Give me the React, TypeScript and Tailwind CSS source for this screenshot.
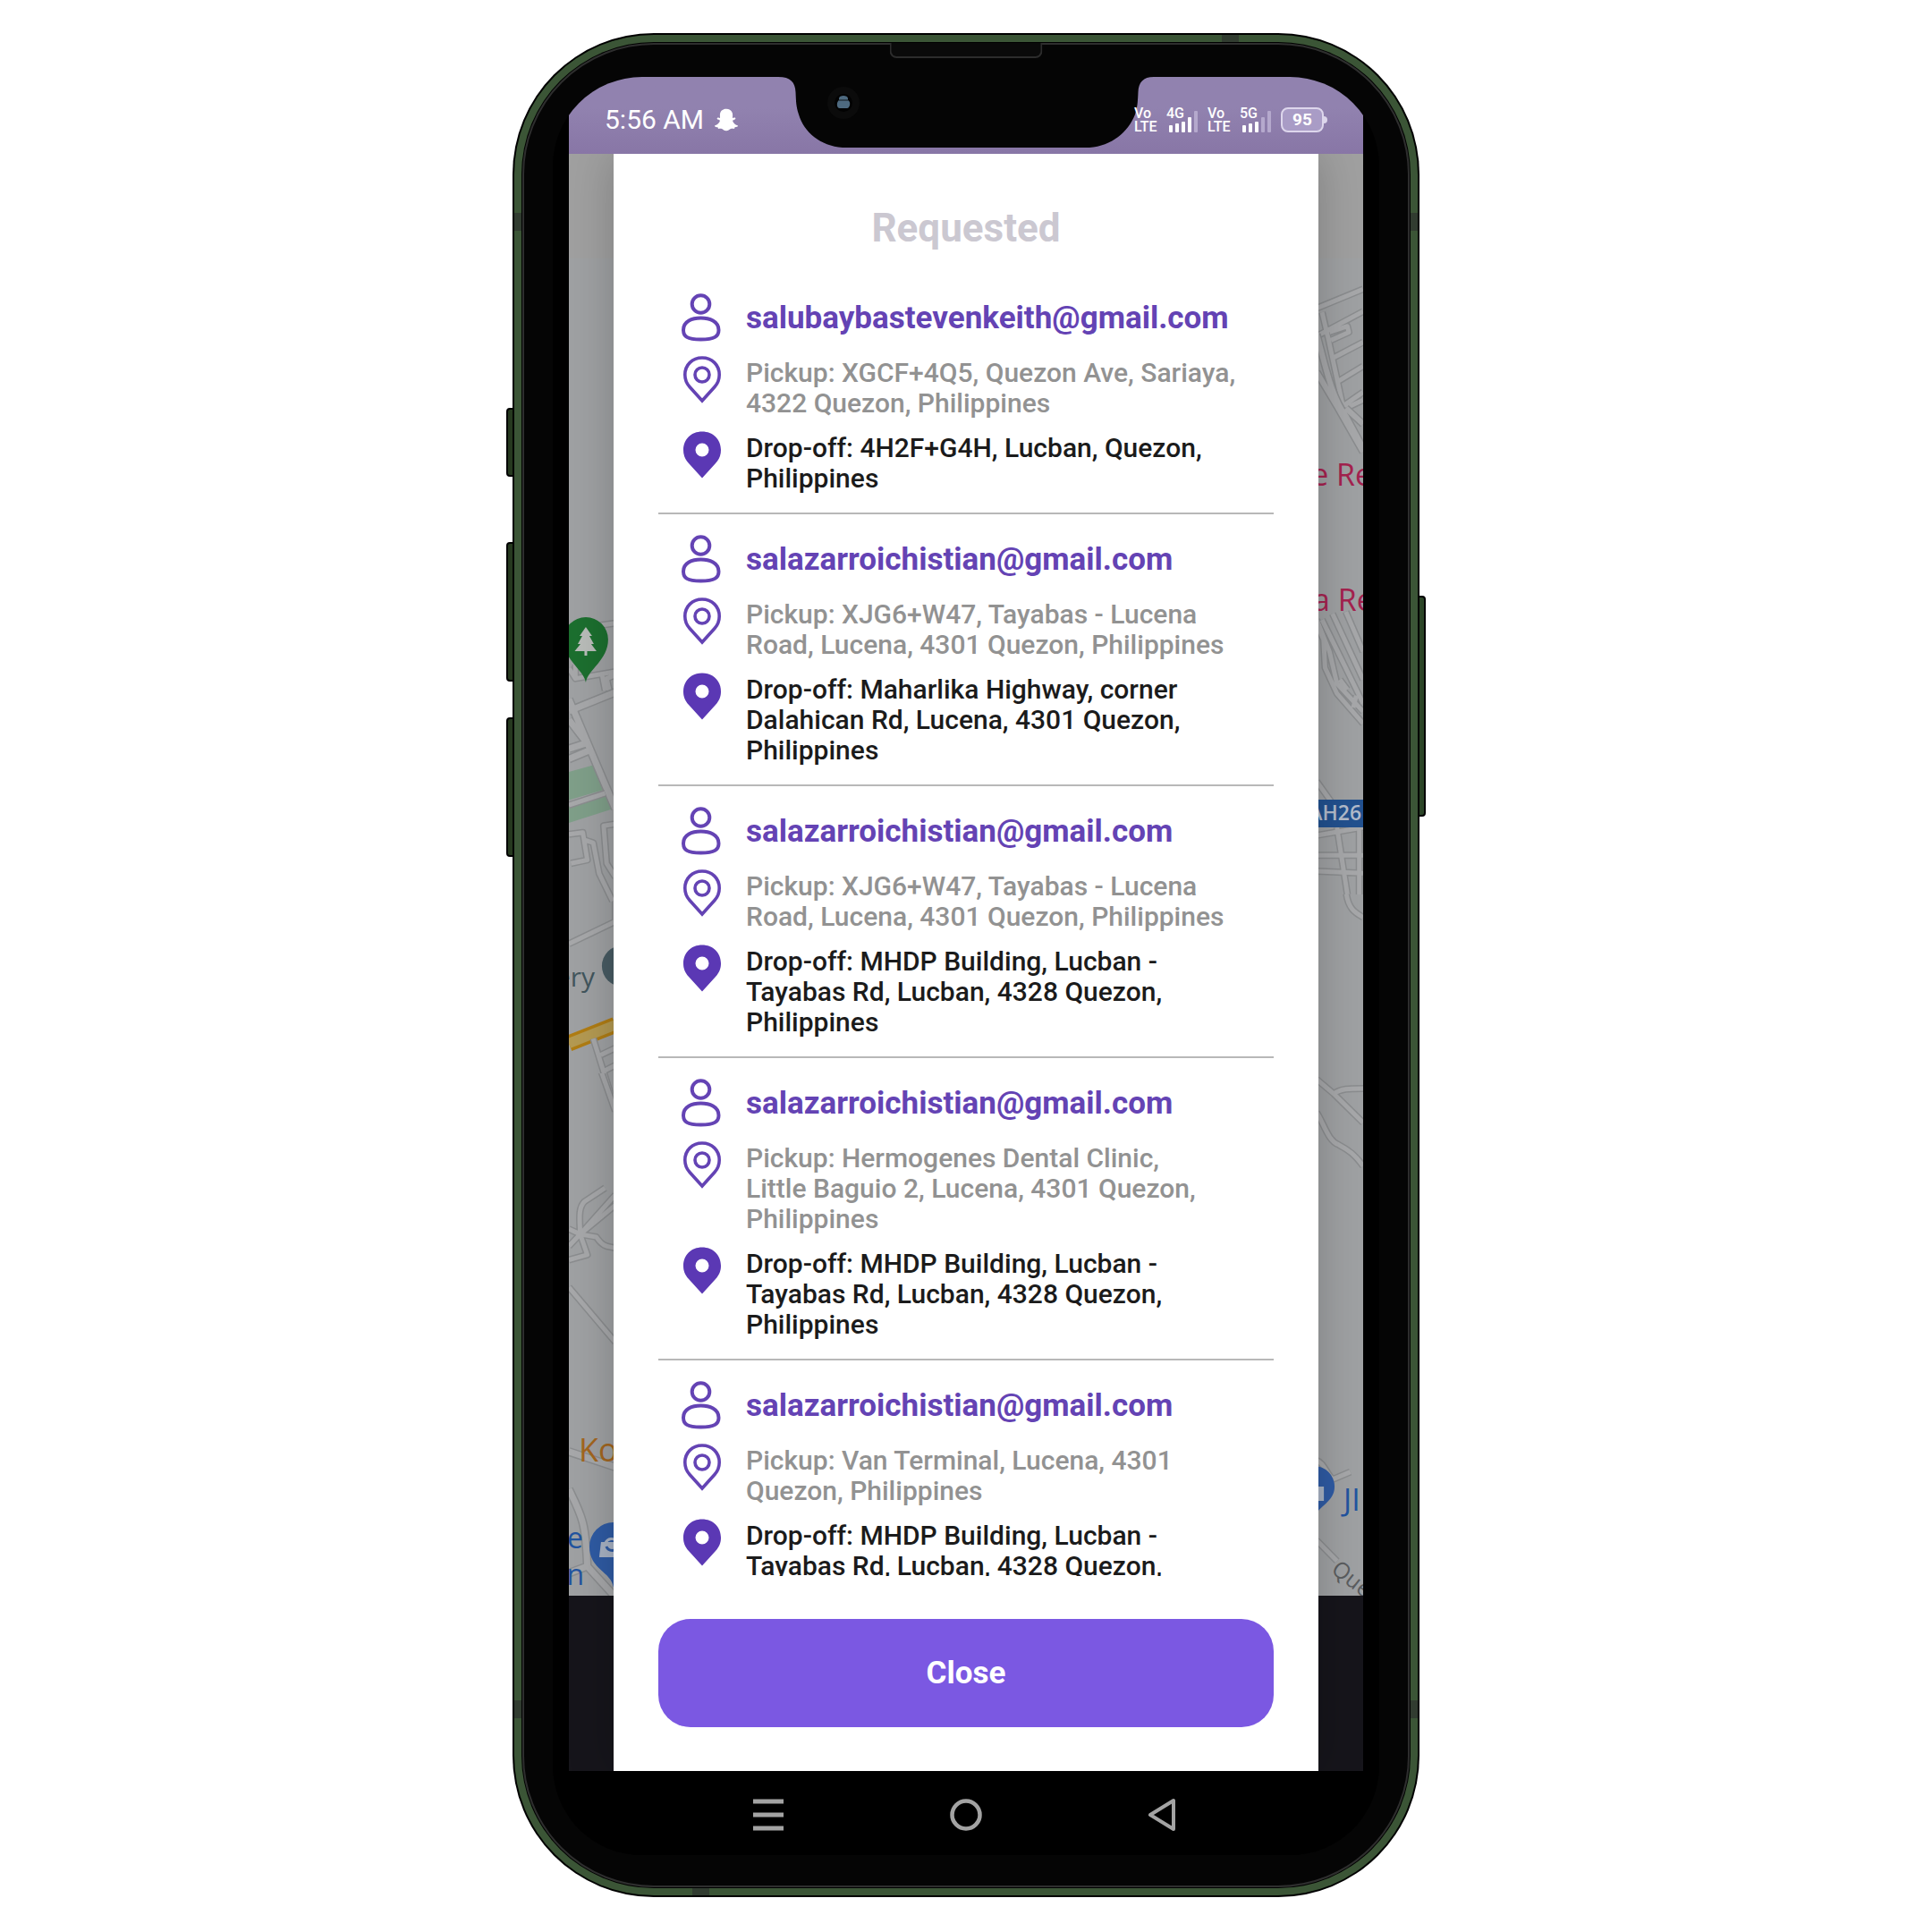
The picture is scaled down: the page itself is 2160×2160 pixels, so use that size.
import React from "react";
import { FaSnapchatGhost } from "react-icons/fa";

type Trip = { email: string; pickup: string; dropoff: string };

const trips: Trip[] = [
  {
    email: "salubaybastevenkeith@gmail.com",
    pickup: "XGCF+4Q5, Quezon Ave, Sariaya, 4322 Quezon, Philippines",
    dropoff: "4H2F+G4H, Lucban, Quezon, Philippines",
  },
  {
    email: "salazarroichistian@gmail.com",
    pickup: "XJG6+W47, Tayabas - Lucena Road, Lucena, 4301 Quezon, Philippines",
    dropoff: "Maharlika Highway, corner Dalahican Rd, Lucena, 4301 Quezon, Philippines",
  },
  {
    email: "salazarroichistian@gmail.com",
    pickup: "XJG6+W47, Tayabas - Lucena Road, Lucena, 4301 Quezon, Philippines",
    dropoff: "MHDP Building, Lucban - Tayabas Rd, Lucban, 4328 Quezon, Philippines",
  },
  {
    email: "salazarroichistian@gmail.com",
    pickup: "Hermogenes Dental Clinic,\nLittle Baguio 2, Lucena, 4301 Quezon, Philippines",
    dropoff: "MHDP Building, Lucban - Tayabas Rd, Lucban, 4328 Quezon, Philippines",
  },
  {
    email: "salazarroichistian@gmail.com",
    pickup: "Van Terminal, Lucena, 4301 Quezon, Philippines",
    dropoff: "MHDP Building, Lucban - Tayabas Rd, Lucban, 4328 Quezon, Philippines",
  },
];

function PersonIcon() {
  return (
    <svg aria-hidden="true" viewBox="0 0 44 56" className="h-14 w-11 shrink-0" fill="none" stroke="#6443b4" strokeWidth="4">
      <circle cx="21.5" cy="12" r="9.800" />
      <path d="M21.5 27.500C31 27.500 41.5 31 41.5 41C41.5 48 37 51.500 21.5 51.500C6 51.500 2 48 2 41C2 31 12 27.500 21.5 27.500Z" />
    </svg>
  );
}

function PinOutlineIcon() {
  return (
    <svg aria-hidden="true" viewBox="0 0 44 54" className="h-[54px] w-11 shrink-0" fill="none" stroke="#6443b4" strokeWidth="3.600">
      <path d="M23 50L9 34.500C5 30 3.800 26 3.800 21C3.800 10 12 2 23 2C34 2 42.200 10 42.200 21C42.200 26 41 30 37 34.500Z" />
      <circle cx="23" cy="21" r="8" />
    </svg>
  );
}

function PinFilledIcon() {
  return (
    <svg aria-hidden="true" viewBox="0 0 44 54" className="h-[54px] w-11 shrink-0" fill="#5b38b4">
      <path
        fillRule="evenodd"
        d="M23 52.500L8 36C3.500 31 2 26.500 2 21C2 9 11 0.500 23 0.500C35 0.500 44 9 44 21C44 26.500 42.500 31 38 36ZM23 13.500A7.500 7.500 0 1 0 23 28.500A7.500 7.500 0 1 0 23 13.500Z"
      />
    </svg>
  );
}

function TripCard({ trip }: { trip: Trip }) {
  return (
    <li className="flex flex-col gap-3.5 border-b-2 border-[#b8b8b8] pt-[23px] pr-10 pb-[21px] pl-[26px]">
      <div className="flex items-center gap-7">
        <PersonIcon />
        <h2 className="text-[35px] leading-[56px] font-bold text-[#6443b4]">{trip.email}</h2>
      </div>
      <div className="flex items-start gap-7">
        <PinOutlineIcon />
        <p className="pt-0.5 text-[30px] leading-[34px] font-medium whitespace-pre-line text-[#929292]">{`Pickup: ${trip.pickup}`}</p>
      </div>
      <div className="flex items-start gap-7">
        <PinFilledIcon />
        <p className="pt-0.5 text-[30px] leading-[34px] font-medium whitespace-pre-line text-[#1b1b1b]">{`Drop-off: ${trip.dropoff}`}</p>
      </div>
    </li>
  );
}

function Roads({ d, width = 5 }: { d: string; width?: number }) {
  return (
    <g fill="none" strokeLinejoin="round">
      <path d={d} stroke="#8b8d8f" strokeWidth={width + 3} vectorEffect="non-scaling-stroke" />
      <path d={d} stroke="#a7a8aa" strokeWidth={width} vectorEffect="non-scaling-stroke" />
    </g>
  );
}

function MapBackdrop() {
  return (
    <svg aria-hidden="true" viewBox="0 0 890 1612" preserveAspectRatio="none" className="block h-full w-full" fontFamily="'Open Sans', sans-serif" fontWeight="500">
      <rect width="890" height="1612" fill="#9fa1a3" />
      <rect width="890" height="117" fill="#a0a0a0" />

      <svg x="0" y="468" width="52" height="600" viewBox="228 0 156 1568" preserveAspectRatio="none">
        <path d="M228 583L315 562L345 635L228 665ZM228 685L365 648L378 690L228 732Z" fill="#7f9f89" />
        <Roads d="M330 155L384 148M228 280L250 310L384 290M250 310V270M340 300L350 345M384 300L355 310L365 350" />
        <Roads d="M228 370L384 690M228 405L384 350M228 515L300 495M228 545L310 515M228 430L290 500" width={7} />
        <Roads d="M228 680L350 645" />
        <Roads d="M228 765L275 760L290 840L235 850M275 780L310 790L330 880L375 960M384 735L345 740L355 850L384 890M228 1085L384 1020V960" />
        <path d="M228 1376L384 1322" fill="none" stroke="#b07d14" strokeWidth="18" vectorEffect="non-scaling-stroke" />
        <path d="M228 1376L384 1322" fill="none" stroke="#b49a52" strokeWidth="11" vectorEffect="non-scaling-stroke" />
        <Roads d="M310 1362L384 1568M335 1410L384 1390M350 1455L384 1440" />
      </svg>

      <svg x="0" y="1028" width="52" height="584" viewBox="228 0 156 1526" preserveAspectRatio="none">
        <Roads d="M335 -10L384 110" />
        <Roads d="M350 335L280 375C258 395 265 430 266 470L384 355M228 455L266 470L228 505M266 470L384 385M228 545L290 530L266 470L320 478C345 510 360 505 384 510M228 625L384 785" />
        <Roads d="M228 1105L384 1150M228 1215C270 1290 285 1310 290 1440L384 1530M228 1460L290 1440" width={7} />
      </svg>

      <svg x="838" y="128" width="52" height="700" viewBox="222 0 156 1568" preserveAspectRatio="none">
        <Roads d="M222 100L378 52M222 170L378 108M240 110L262 180L310 345L378 310M265 160L325 145L330 160L270 180M275 225L378 185M290 285L378 245M320 350L378 330" />
        <Roads d="M222 165C250 240 270 320 320 370L378 450M222 260L290 345L378 460M320 350L378 390" width={6} />
        <Roads d="M222 880L265 960L290 1040L378 1110M240 880L378 1090M275 865L378 1030M320 860L378 960M222 890L245 930L250 1000L290 1065L378 1140M300 1030L325 1055M345 1100L355 1070" />
        <Roads d="M222 1285L270 1335M222 1420L378 1400M222 1470L378 1470M222 1510L378 1515M290 1400L325 1568M365 1400V1568" />
      </svg>

      <svg x="838" y="828" width="52" height="784" viewBox="222 0 156 1536" preserveAspectRatio="none">
        <Roads d="M320 -10C325 30 350 40 378 50" />
        <Roads d="M222 405L280 437L378 500M280 437C300 425 330 425 378 425M222 478C245 500 260 540 295 548C330 560 350 570 378 595" />
        <Roads d="M222 1240C250 1245 260 1280 280 1280L335 1265M222 1415L290 1460" />
      </svg>

      <path d="M19 591C17 577 -6 566 -6 543A25 25 0 0 1 44 543C44 566 21 577 19 591Z" fill="#1c6f2f" />
      <path d="M19 529L26 539H23L28 548H25L31 556H20.500V561H17.500V556H6.500L13 548H10L15 539H12Z" fill="#b9bcb9" />

      <circle cx="60" cy="908" r="23" fill="#485b63" />
      <text x="29" y="931" textAnchor="end" fontSize="30" fill="#42565d">ery</text>
      <text x="11" y="1462" fontSize="36" fill="#a3661f">Ko</text>
      <text x="16" y="1559" textAnchor="end" fontSize="32" fill="#2254a0">e</text>
      <text x="17" y="1600" textAnchor="end" fontSize="32" fill="#2254a0">n</text>
      <path d="M50 1603C48 1585 23 1583 23 1557A27 27 0 0 1 77 1557C77 1583 52 1585 50 1603Z" fill="#2f5ba4" />
      <path d="M36 1552H60V1569H34Z" fill="#a9b3c4" />
      <path d="M41 1553A8 8 0 0 1 54 1551" fill="none" stroke="#a9b3c4" strokeWidth="3" />
      <path d="M42 1557A7 7 0 0 0 55 1557" fill="none" stroke="#2f5ba4" strokeWidth="3" />

      <text x="832" y="371" fontSize="34" fill="#a5224f">e Re</text>
      <text x="834" y="511" fontSize="34" fill="#a5224f">a Re</text>
      <rect x="830" y="722" width="60" height="31" fill="#22518f" />
      <text x="888" y="745" textAnchor="end" fontSize="23" fontWeight="600" fill="#b3bccb">AH26</text>
      <path d="M836 1525C834 1512 812 1508 812 1490A23 23 0 0 1 858 1490C858 1508 838 1512 836 1525Z" fill="#2f5ba4" />
      <rect x="828" y="1490" width="18" height="16" fill="#a9b3c4" />
      <text x="868" y="1517" fontSize="34" fill="#2254a0">JI</text>
      <text x="853" y="1585" fontSize="25" fill="#5b5d5f" transform="rotate(38 853 1585)">Que</text>
    </svg>
  );
}

function VoLte() {
  return (
    <div className="flex w-6 flex-col text-[16px] leading-[15px] font-medium">
      <span>Vo</span>
      <span>LTE</span>
    </div>
  );
}

const signalBars = [
  { x: 3, height: 8 },
  { x: 10, height: 10 },
  { x: 17, height: 12 },
  { x: 24, height: 17 },
  { x: 31, height: 24 },
];

function Signal({ label, level }: { label: string; level: number }) {
  return (
    <div className="relative h-[30px] w-[34px]">
      <svg aria-hidden="true" viewBox="0 0 35 30" className="h-[30px] w-[35px]">
        {signalBars.map(({ x, height }, i) => (
          <rect key={x} x={x} y={29 - height} width="4" height={height} rx="1" fill={i < level ? "#fff" : "#b5a9cd"} />
        ))}
      </svg>
      <span className="absolute top-0 left-0 text-[16px] leading-[15px] font-medium">{label}</span>
    </div>
  );
}

function StatusBar() {
  return (
    <header className="relative flex h-[86px] shrink-0 items-center justify-between bg-linear-to-b from-[#9182af] from-40% to-[#8876a6] px-10 pt-2.5 text-white">
      <div className="flex items-center gap-3">
        <time className="text-[30px] leading-8">5:56 AM</time>
        <FaSnapchatGhost aria-label="Snapchat" className="size-[26px]" />
      </div>
      <svg aria-hidden="true" viewBox="0 0 420 80" className="absolute top-0 left-1/2 h-20 w-[420px] -translate-x-1/2">
        <path
          d="M0 -1V0C14 0 19 6 19.500 17C20 27 20 33 23 42C29 62 47 77 72 79H348C373 77 391 62 399 42C402 33 402 27 402.500 17C403 6 408 0 420 0V-1Z"
          fill="#050505"
        />
        <circle cx="73" cy="29" r="18" fill="#0b0b0b" />
        <circle cx="73" cy="29" r="10" fill="#020202" />
        <path d="M68 24C68 20 78 20 78 24V26C82 28 80 35 77 35H69C65 35 65 28 68 26Z" fill="#4e6a80" />
        <path d="M68 26H78" stroke="#26333d" strokeWidth="1.500" />
      </svg>
      <div className="relative flex items-center gap-3">
        <VoLte />
        <Signal label="4G" level={4} />
        <VoLte />
        <Signal label="5G" level={3} />
        <div className="flex items-center">
          <div className="flex h-7 w-12 items-center justify-center rounded-lg border-2 border-[#ddd6ec] bg-[#a99cc6] text-[19px] leading-5 font-bold">95</div>
          <div className="h-2 w-1 rounded-r bg-[#ddd6ec]" />
        </div>
      </div>
    </header>
  );
}

function NavBar() {
  return (
    <nav aria-label="System" className="flex h-[94px] shrink-0 items-start justify-center gap-[183px] bg-black pt-[30px] text-[#a3a3a3]">
      <button type="button" aria-label="Recent apps">
        <svg viewBox="0 0 38 38" className="size-[38px]" stroke="currentColor" strokeWidth="5">
          <path d="M2 4H36M2 19H36M2 34H36" />
        </svg>
      </button>
      <button type="button" aria-label="Home">
        <svg viewBox="0 0 38 38" className="size-[38px]" fill="none" stroke="currentColor" strokeWidth="4.500">
          <circle cx="19" cy="19" r="15.500" />
        </svg>
      </button>
      <button type="button" aria-label="Back">
        <svg viewBox="0 0 38 38" className="size-[38px]" fill="none" stroke="currentColor" strokeWidth="4" strokeLinejoin="round">
          <path d="M30 3V35L4 19Z" />
        </svg>
      </button>
    </nav>
  );
}

export default function App() {
  return (
    <div className="flex h-screen justify-center bg-white px-4 pt-[37px] pb-[39px] font-['Roboto',sans-serif]">
      <div className="relative flex w-full max-w-[1014px]">
        <div className="absolute top-[419px] -left-[7px] h-[77px] w-[9px] rounded-l border-2 border-black bg-[#26391f]" />
        <div className="absolute top-[569px] -left-[7px] h-[156px] w-[9px] rounded-l border-2 border-black bg-[#26391f]" />
        <div className="absolute top-[765px] -left-[7px] h-[156px] w-[9px] rounded-l border-2 border-black bg-[#26391f]" />
        <div className="absolute top-[629px] -right-[7px] h-[247px] w-[9px] rounded-r border-2 border-black bg-[#2c4528]" />

        <div className="relative flex w-full rounded-[158px] bg-black p-0.5">
          <div className="relative flex w-full overflow-hidden rounded-[156px] bg-[#3b5536] p-2">
            <div className="absolute top-0 right-[200px] h-2 w-[19px] bg-[#313c30]" />
            <div className="absolute bottom-0 left-[199px] h-2 w-[19px] bg-[#313c30]" />
            <div className="absolute top-[199px] left-0 h-5 w-2 bg-[#313c30]" />
            <div className="absolute top-[199px] right-0 h-5 w-2 bg-[#313c30]" />
            <div className="absolute bottom-[198px] left-0 h-5 w-2 bg-[#313c30]" />
            <div className="absolute right-0 bottom-[198px] h-5 w-2 bg-[#313c30]" />
            <div className="relative flex w-full rounded-[148px] bg-black p-px">
              <div className="relative flex w-full rounded-[147px] border-2 border-[#2e2e2e] bg-[#050505] px-8 pt-9 pb-[34px]">
                <div className="absolute -top-0.5 left-1/2 h-[17px] w-[171px] -translate-x-1/2 rounded-b-lg border-2 border-t-0 border-[#2c2c2c] bg-[#0a0a0a]" />

                <div className="flex w-full flex-col overflow-hidden rounded-[100px] bg-black">
                  <div className="mx-[18px] flex min-h-0 flex-1 flex-col">
                    <StatusBar />
                    <div className="relative flex min-h-0 flex-1 flex-col overflow-hidden bg-[#16151b]">
                      <div className="absolute inset-x-0 top-0 bottom-[196px]">
                        <MapBackdrop />
                      </div>
                      <section
                        role="dialog"
                        aria-labelledby="dialog-title"
                        className="relative mx-[50px] flex min-h-0 flex-1 flex-col bg-white px-[50px] pb-[49px] shadow-[0_0_48px_rgba(0,0,0,0.22)]"
                      >
                        <h1 id="dialog-title" className="pt-[59px] pb-[26px] text-center text-[44px] leading-[48px] font-bold text-[#cbc8d1]">
                          Requested
                        </h1>
                        <ul className="min-h-0 flex-1 overflow-y-auto [scrollbar-width:none]">
                          {trips.map((trip, i) => (
                            <TripCard key={i} trip={trip} />
                          ))}
                        </ul>
                        <button type="button" className="mt-12 h-[121px] shrink-0 rounded-[36px] bg-[#7b58e2] text-[35px] leading-10 font-bold text-white">
                          Close
                        </button>
                      </section>
                    </div>
                    <NavBar />
                  </div>
                </div>
              </div>
            </div>
          </div>
        </div>
      </div>
    </div>
  );
}
